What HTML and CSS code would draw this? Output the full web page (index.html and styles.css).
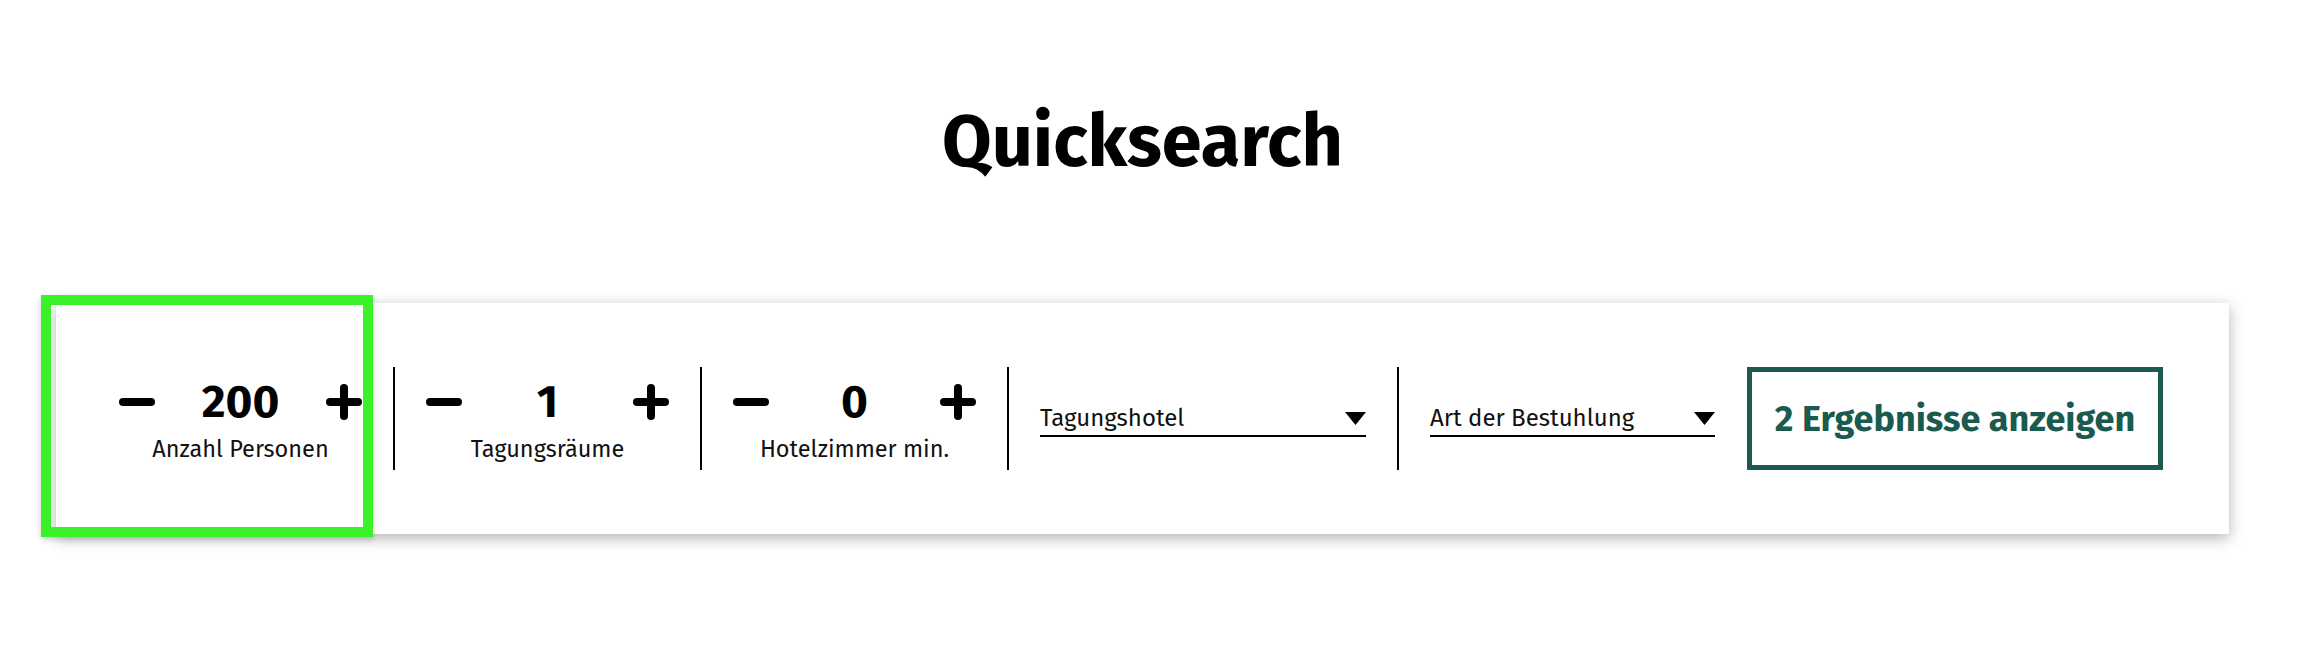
FILE: index.html
```html
<!DOCTYPE html>
<html>
<head>
    <title>Quicksearch</title>
    <link rel="stylesheet" href="styles.css">
</head>
<body>
    <div class="page">
        <h1 class="title">Quicksearch</h1>

        <div class="quicksearch">
            <div class="stepper">
                <div class="stepper-controls">
                    <button class="step-btn" aria-label="weniger">
                        <svg width="36" height="36" viewBox="0 0 36 36"><line x1="4" y1="18" x2="32" y2="18" /></svg>
                    </button>
                    <span class="step-value">200</span>
                    <button class="step-btn" aria-label="mehr">
                        <svg width="36" height="36" viewBox="0 0 36 36"><line x1="4" y1="18" x2="32" y2="18" /><line x1="18" y1="4" x2="18" y2="32" /></svg>
                    </button>
                </div>
                <div class="stepper-label">Anzahl Personen</div>
            </div>
            <div class="divider"></div>

            <div class="stepper">
                <div class="stepper-controls">
                    <button class="step-btn" aria-label="weniger">
                        <svg width="36" height="36" viewBox="0 0 36 36"><line x1="4" y1="18" x2="32" y2="18" /></svg>
                    </button>
                    <span class="step-value">1</span>
                    <button class="step-btn" aria-label="mehr">
                        <svg width="36" height="36" viewBox="0 0 36 36"><line x1="4" y1="18" x2="32" y2="18" /><line x1="18" y1="4" x2="18" y2="32" /></svg>
                    </button>
                </div>
                <div class="stepper-label">Tagungsräume</div>
            </div>
            <div class="divider"></div>

            <div class="stepper">
                <div class="stepper-controls">
                    <button class="step-btn" aria-label="weniger">
                        <svg width="36" height="36" viewBox="0 0 36 36"><line x1="4" y1="18" x2="32" y2="18" /></svg>
                    </button>
                    <span class="step-value">0</span>
                    <button class="step-btn" aria-label="mehr">
                        <svg width="36" height="36" viewBox="0 0 36 36"><line x1="4" y1="18" x2="32" y2="18" /><line x1="18" y1="4" x2="18" y2="32" /></svg>
                    </button>
                </div>
                <div class="stepper-label">Hotelzimmer min.</div>
            </div>
            <div class="divider"></div>

            <div class="select-cell">
                <div class="select-field">
                    <span>Tagungshotel</span>
                    <svg width="21" height="13" viewBox="0 0 21 13"><polygon points="0,0 21,0 10.5,13" /></svg>
                </div>
            </div>
            <div class="divider"></div>

            <div class="select-cell select-cell-last">
                <div class="select-field">
                    <span>Art der Bestuhlung</span>
                    <svg width="21" height="13" viewBox="0 0 21 13"><polygon points="0,0 21,0 10.5,13" /></svg>
                </div>
            </div>

            <button class="submit">2 Ergebnisse anzeigen</button>

            <!-- highlight frame around the first field -->
            <div class="highlight"></div>
        </div>
    </div>
</body>
</html>
```

FILE: styles.css
```css
body {
    margin: 0;
    background-color: #fff;
    font-family: "Fira Sans", Roboto, sans-serif;
    color: #000;
}

.page {
    padding: 99px 93px 120px 56px;
}

.title {
    margin: 0 0 118px 0;
    font-size: 72px;
    line-height: 86px;
    font-weight: 700;
    text-align: center;
}

.quicksearch {
    position: relative;
    display: flex;
    align-items: center;
    height: 231px;
    padding: 0 65px 0 32px;
    background-color: #fff;
    box-shadow: 0 4px 14px rgba(0, 0, 0, 0.3);
}

.stepper {
    display: flex;
    flex-direction: column;
    gap: 10px;
    width: 305px;
    height: 103px;
    padding: 12px 31px 0 31px;
    box-sizing: border-box;
}

.stepper-controls {
    display: flex;
    align-items: center;
    justify-content: space-between;
    height: 46px;
}

.step-btn {
    display: flex;
    padding: 0;
    border: none;
    background: none;
    cursor: pointer;
}

.step-btn line {
    stroke: #000;
    stroke-width: 8;
    stroke-linecap: round;
}

.step-value {
    font-size: 46px;
    line-height: 46px;
    font-weight: 700;
}

.stepper-label {
    font-size: 23.5px;
    line-height: 28px;
    text-align: center;
    color: #111;
}

.divider {
    flex: none;
    width: 2px;
    height: 103px;
    background-color: #000;
}

.select-cell {
    width: 388px;
    padding: 4px 31px 0 31px;
    box-sizing: border-box;
}

.select-cell-last {
    width: 348px;
    padding-right: 32px;
}

.select-field {
    display: flex;
    align-items: center;
    justify-content: space-between;
    padding-bottom: 3px;
    border-bottom: 2px solid #000;
    font-size: 24px;
    line-height: 28px;
    color: #111;
    cursor: pointer;
}

.select-field svg {
    fill: #000;
}

.submit {
    flex: none;
    width: 416px;
    height: 103px;
    padding: 0;
    border: 5px solid #1b5a4e;
    background-color: #fff;
    color: #1b5a4e;
    font-family: inherit;
    font-size: 36px;
    font-weight: 700;
    cursor: pointer;
}

.highlight {
    position: absolute;
    left: -15px;
    top: -8px;
    width: 332px;
    height: 242px;
    box-sizing: border-box;
    border: 10px solid #3af22a;
    box-shadow: 0 2px 6px rgba(0, 0, 0, 0.2);
    pointer-events: none;
}
```
